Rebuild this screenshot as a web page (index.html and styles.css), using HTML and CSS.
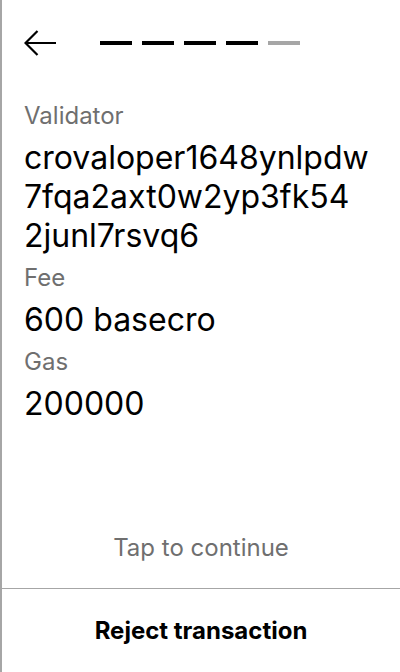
FILE: index.html
```html
<!DOCTYPE html>
<html>
<head>
<meta charset="utf-8">
<link rel="stylesheet" href="styles.css">
</head>
<body>
<div class="screen">
  <div class="header">
    <svg class="back" width="32" height="26" viewBox="0 0 32 26">
      <path d="M32 13H1.5M13.5 1L1.5 13L13.5 25" fill="none" stroke="#000" stroke-width="2.2"/>
    </svg>
    <div class="steps">
      <span class="step done"></span>
      <span class="step done"></span>
      <span class="step done"></span>
      <span class="step done"></span>
      <span class="step"></span>
    </div>
  </div>
  <div class="content">
    <div class="label">Validator</div>
    <div class="value">crovaloper1648ynlpdw<br>7fqa2axt0w2yp3fk54<br>2junl7rsvq6</div>
    <div class="label">Fee</div>
    <div class="value">600 basecro</div>
    <div class="label">Gas</div>
    <div class="value">200000</div>
  </div>
  <div class="tap">Tap to continue</div>
  <div class="footer">Reject transaction</div>
</div>
</body>
</html>
```
FILE: styles.css
```css
html, body {
  margin: 0;
  padding: 0;
  background: #fff;
}
.screen {
  width: 398px;
  height: 672px;
  border-left: 2px solid #a6a6a6;
  display: flex;
  flex-direction: column;
  font-family: Inter, "Noto Sans", sans-serif;
  color: #000;
}
.header {
  display: flex;
  align-items: center;
  padding: 30px 0 0 22px;
  height: 26px;
}
.back {
  display: block;
}
.steps {
  display: flex;
  gap: 10px;
  margin-left: 44px;
}
.step {
  width: 32px;
  height: 4px;
  background: #a6a6a6;
}
.step.done {
  background: #000;
}
.content {
  padding: 45px 12px 0 22px;
  flex: 1;
}
.label {
  font-size: 24px;
  line-height: 30px;
  color: #6f6f6f;
  margin-bottom: 7px;
}
.value {
  font-size: 32px;
  line-height: 39px;
  margin-bottom: 8px;
  white-space: nowrap;
}
.tap {
  text-align: center;
  font-size: 24px;
  line-height: 30px;
  color: #6f6f6f;
  padding-bottom: 25px;
}
.footer {
  border-top: 1px solid #a6a6a6;
  height: 83px;
  display: flex;
  align-items: center;
  justify-content: center;
  font-size: 24px;
  font-weight: 700;
}
```
